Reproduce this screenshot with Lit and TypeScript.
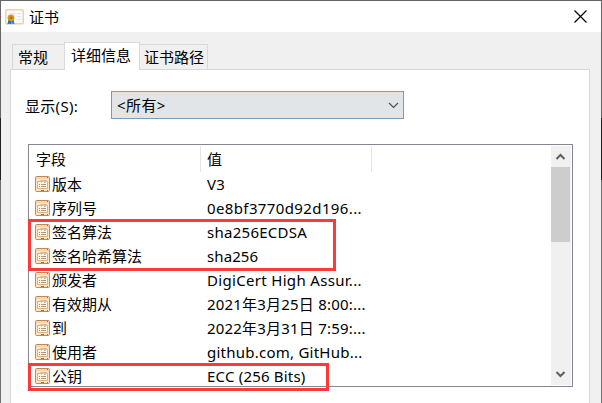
import { LitElement, html, css } from "lit";
import { customElement, property } from "lit/decorators.js";

interface Field {
  name: string;
  value: string;
  spacing: number;
}

const FIELDS: Field[] = [
  { name: "版本", value: "V3", spacing: 0.2 },
  { name: "序列号", value: "0e8bf3770d92d196...", spacing: 0.38 },
  { name: "签名算法", value: "sha256ECDSA", spacing: 0.27 },
  { name: "签名哈希算法", value: "sha256", spacing: 0.1 },
  { name: "颁发者", value: "DigiCert High Assur...", spacing: 0.32 },
  { name: "有效期从", value: "2021年3月25日 8:00:...", spacing: 0.2 },
  { name: "到", value: "2022年3月31日 7:59:...", spacing: 0.2 },
  { name: "使用者", value: "github.com, GitHub...", spacing: 0.24 },
  { name: "公钥", value: "ECC (256 Bits)", spacing: 0.2 },
];

@customElement("field-icon")
export class FieldIcon extends LitElement {
  static styles = css`
    :host { display: block; width: 15px; height: 16px; }
    svg { display: block; }
  `;
  render() {
    return html`<svg width="15" height="16" viewBox="0 0 15 16">
      <rect x="0.5" y="0.5" width="14" height="15" rx="1" fill="#ffe6ca" stroke="#be8a5e" />
      <path d="M1 1h13v2H1z" fill="#fcd3a8" />
      <path d="M12 1h1v1h-1zM6 14h3v1H6zM12 14h1v1h-1z" fill="#a86c3c" />
      <path d="M2.500 5.500h3v-1h2v1h1v-1h3v1h1v7h-10z" fill="#fff8ef" stroke="#dcae80" />
      <path d="M6 5h1v2H6zM9 5h2v2H9z" fill="#e3bb92" />
      <path d="M4 8h1v1H4zM6 8h5v1H6zM4 10h1v1H4zM6 10h5v1H6z" fill="#c68e60" />
    </svg>`;
  }
}

@customElement("field-list")
export class FieldList extends LitElement {
  @property({ attribute: false }) fields: Field[] = [];

  static styles = css`
    :host {
      box-sizing: border-box;
      display: flex;
      width: 545px;
      height: 243px;
      border: 1px solid #828790;
      padding: 1px;
      background: #fff;
      position: relative;
    }
    .table { flex: 1; min-width: 0; }
    .row {
      display: grid;
      grid-template-columns: 171px 171px;
      height: 24px;
      line-height: 24px;
      white-space: nowrap;
    }
    .head { height: 26px; line-height: 26px; }
    .head > div { border-right: 1px solid #e5e5e5; }
    .name { display: flex; align-items: center; gap: 2px; padding-left: 5px; }
    .head .name { padding-left: 6px; }
    .value { padding-left: 6px; }
    .scroll {
      display: flex;
      flex-direction: column;
      width: 20px;
      background: #f0f0f0;
    }
    .scroll svg { display: block; flex: none; }
    .thumb { width: 19px; height: 75px; background: #cdcdcd; }
    .track { flex: 1; }
    .mark {
      position: absolute;
      box-sizing: border-box;
      border: 3px solid #ff3939;
      left: -1px;
    }
    .signature { top: 74px; width: 308px; height: 52px; }
    .key { top: 218px; width: 301px; height: 28px; }
  `;

  render() {
    return html`
      <div class="table">
        <div class="row head"><div class="name">字段</div><div class="value">值</div></div>
        ${this.fields.map(
          (f) => html`<div class="row">
            <div class="name"><field-icon></field-icon><span>${f.name}</span></div>
            <div class="value" style="letter-spacing:${f.spacing}px">${f.value}</div>
          </div>`
        )}
      </div>
      <div class="scroll">
        <svg width="20" height="21"><path d="M5.500 13 9.500 9l4 4" fill="none" stroke="#606060" stroke-width="2" /></svg>
        <div class="thumb"></div>
        <div class="track"></div>
        <svg width="20" height="21"><path d="M5.500 8 9.500 12l4-4" fill="none" stroke="#606060" stroke-width="2" /></svg>
      </div>
      <div class="mark signature"></div>
      <div class="mark key"></div>
    `;
  }
}

@customElement("app-root")
export class AppRoot extends LitElement {
  static styles = css`
    :host {
      box-sizing: border-box;
      display: flex;
      flex-direction: column;
      width: 602px;
      height: 403px;
      overflow: hidden;
      border: 1px solid #656565;
      border-bottom: 0;
      border-image: linear-gradient(#656565 118px, #202020 118px, #202020 180px, #707070 180px) 1;
      background: #f0f0f0;
      color: #000;
      font: 15px "Noto Sans", "Noto Sans CJK SC", sans-serif;
    }
    .title {
      display: flex;
      align-items: center;
      height: 31px;
      flex: none;
      background: #fff;
      padding: 0 14px 0 4px;
    }
    .title .text { flex: 1; margin-left: 5px; margin-top: -1px; }
    .tabs {
      display: flex;
      align-items: flex-end;
      height: 37px;
      flex: none;
      padding-left: 11px;
    }
    .tab {
      box-sizing: border-box;
      height: 25px;
      line-height: 25px;
      border: 1px solid #d9d9d9;
      border-bottom: 0;
      padding-left: 5px;
      white-space: nowrap;
    }
    .general { width: 52px; border-right: 0; }
    .details {
      width: 76px;
      height: 28px;
      margin-bottom: -1px;
      line-height: 25px;
      padding-left: 6px;
      background: #fff;
      position: relative;
    }
    .path { width: 68px; border-left: 0; padding-left: 4px; }
    .panel {
      flex: 1;
      margin: 0 11px 0 9px;
      border: 1px solid #d9d9d9;
      border-bottom: 0;
      background: #fff;
      padding: 21px 0 0 17px;
    }
    .filter { display: flex; height: 28px; line-height: 30px; margin-bottom: 25px; }
    .label { width: 86px; box-sizing: border-box; margin-left: -3px; letter-spacing: 0.3px; }
    .select {
      box-sizing: border-box;
      width: 293px;
      height: 28px;
      line-height: 27px;
      border: 1px solid #7a9ab5;
      background: #e1e5e8;
      padding: 0 4px 0 5px;
      display: flex;
      justify-content: space-between;
      align-items: center;
      letter-spacing: 0.4px;
    }
  `;

  render() {
    return html`
      <div class="title">
        <svg width="19" height="16" viewBox="0 0 19 16">
          <rect x="0.750" y="0.750" width="17.500" height="14" rx="0.800" fill="#f8fafb" stroke="#ecd3ac" stroke-width="1.500" />
          <path d="M4 4.500h6M12 4.500h4M12 7.500h4M12 10.500h4" stroke="#dfe5ea" />
          <path d="M3.500 10 2.500 15.500l2-1 1.500 1 .3-5z" fill="#2468c8" />
          <path d="M8.500 10l1 5.500-2-1-1 1-.5-5z" fill="#2f7de0" />
          <circle cx="6" cy="8.800" r="3.400" fill="#d99a16" />
          <circle cx="6" cy="8.800" r="1.400" fill="#a87008" />
        </svg>
        <span class="text">证书</span>
        <svg width="13" height="13"><path d="M.5.5l12 12M12.500.5l-12 12" stroke="#000" stroke-width="1.200" /></svg>
      </div>
      <div class="tabs">
        <div class="tab general">常规</div>
        <div class="tab details">详细信息</div>
        <div class="tab path">证书路径</div>
      </div>
      <div class="panel">
        <div class="filter">
          <span class="label">显示(S):</span>
          <div class="select">
            <span>&lt;所有&gt;</span>
            <svg width="11" height="7"><path d="M1 1l4.500 4.500L10 1" fill="none" stroke="#505050" stroke-width="1.200" /></svg>
          </div>
        </div>
        <field-list .fields=${FIELDS}></field-list>
      </div>
    `;
  }
}
